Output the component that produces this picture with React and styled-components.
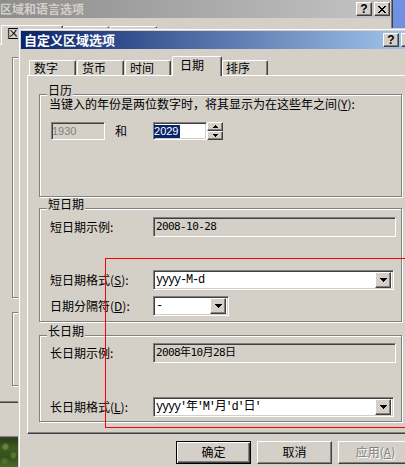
import React from "react";
import styled, { createGlobalStyle, css } from "styled-components";

const FACE = "#d4d0c8";
const SHADOW = "#808080";
const DARK = "#404040";
const CJK = `"Noto Sans CJK SC", "Noto Sans", sans-serif`;

const GlobalStyle = createGlobalStyle`
  html, body { margin: 0; padding: 0; background: ${FACE}; overflow: hidden; }
`;

const raised = css`
  border: 1px solid;
  border-color: #fff ${DARK} ${DARK} #fff;
  box-shadow: inset -1px -1px ${SHADOW};
`;

const sunken = css`
  border: 1px solid;
  border-color: ${SHADOW} #fff #fff ${SHADOW};
  box-shadow: inset 1px 1px ${DARK}, inset -1px -1px ${FACE};
`;

const Desktop = styled.div`
  position: relative;
  width: 405px;
  height: 467px;
  overflow: hidden;
  background: linear-gradient(160deg, #7c9be6, #4f74d6);
  font-family: ${CJK};
  font-size: 12px;
  line-height: 14px;
  color: #000;
`;

/* wallpaper showing at the bottom left corner */
const Grass = styled.div`
  position: absolute;
  left: 0;
  bottom: 0;
  width: 18px;
  height: 29px;
  background:
    radial-gradient(circle at 30% 30%, rgba(120, 150, 70, 0.7) 0 2px, transparent 4px),
    radial-gradient(circle at 75% 60%, rgba(110, 140, 60, 0.6) 0 2px, transparent 4px),
    radial-gradient(circle at 25% 80%, rgba(95, 125, 50, 0.6) 0 2px, transparent 4px),
    linear-gradient(180deg, #2a3c16, #3f5a22 35%, #34501c 65%, #4c6b2a);
`;

const Window = styled.div`
  position: absolute;
  left: ${p => p.$x}px;
  top: ${p => p.$y}px;
  width: ${p => p.$w}px;
  height: ${p => p.$h}px;
  box-sizing: border-box;
  display: flex;
  flex-direction: column;
  background: ${FACE};
  border: 1px solid;
  border-color: ${FACE} ${DARK} ${DARK} ${FACE};
  box-shadow: inset 1px 1px #fff, inset -1px -1px ${SHADOW};
  padding: 2px;
  z-index: ${p => p.$z};
`;

const TitleBar = styled.div`
  flex: none;
  height: 18px;
  display: flex;
  align-items: center;
  gap: 2px;
  padding: 0 ${p => p.$pr}px 0 ${p => p.$pl}px;
  background: ${p =>
    p.$active
      ? "linear-gradient(to right, #0a246a, #a6caf0)"
      : "linear-gradient(to right, #8c8c8c, #c4c4c4)"};
  color: ${p => (p.$active ? "#fff" : FACE)};
`;

const TitleText = styled.div`
  flex: 1;
  font-weight: bold;
  font-size: ${p => p.$size}px;
  white-space: nowrap;
`;

const CapButton = styled.div`
  flex: none;
  box-sizing: border-box;
  width: 16px;
  height: 14px;
  display: flex;
  align-items: center;
  justify-content: center;
  background: ${FACE};
  ${raised};
  color: #000;
  font-family: "Liberation Sans", sans-serif;
  font-weight: bold;
  font-size: 12px;
  line-height: 12px;
`;

const Body = styled.div`
  flex: 1;
  display: flex;
  flex-direction: column;
  padding: 7px 6px 0 ${p => p.$pl}px;
`;

const TabRow = styled.div`
  flex: none;
  height: 19px;
  display: flex;
  align-items: flex-end;
  padding-left: 2px;
  position: relative;
  z-index: 2;
`;

const Tab = styled.div`
  flex: none;
  box-sizing: border-box;
  width: ${p => p.$w}px;
  height: ${p => p.$h}px;
  margin-left: ${p => p.$ml || 0}px;
  margin-bottom: ${p => (p.$active ? -1 : 0)}px;
  padding: ${p => p.$pt}px 0 0 ${p => p.$pl}px;
  background: ${FACE};
  border-top: 1px solid #fff;
  border-left: 1px solid #fff;
  border-right: 1px solid ${DARK};
  box-shadow: inset -1px 0 ${SHADOW};
  border-radius: 2px 2px 0 0;
  white-space: nowrap;
  overflow: hidden;
`;

const Panel = styled.div`
  flex: none;
  box-sizing: border-box;
  height: 359px;
  display: flex;
  flex-direction: column;
  align-items: flex-start;
  padding: 0 0 0 ${p => p.$pl}px;
  border-top: 1px solid #fff;
  border-left: 1px solid #fff;
  border-right: 1px solid ${DARK};
  border-bottom: 1px solid ${DARK};
  box-shadow: inset -1px -1px ${SHADOW};
  position: relative;
  z-index: 1;
`;

const Group = styled.div`
  position: relative;
  flex: none;
  box-sizing: border-box;
  width: ${p => p.$w}px;
  height: ${p => p.$h}px;
  margin-top: ${p => p.$mt}px;
  padding: ${p => p.$pt || 0}px 0 0 ${p => p.$pl || 0}px;
  border: 1px solid ${SHADOW};
  box-shadow: 1px 1px 0 #fff, inset 1px 1px 0 #fff;
`;

const Legend = styled.div`
  position: absolute;
  top: -11px;
  left: 7px;
  padding: 0 1px;
  line-height: 12px;
  background: ${FACE};
  white-space: nowrap;
`;

const Para = styled.div`
  white-space: nowrap;
  margin-top: 2px;
`;

const EditRow = styled.div`
  display: flex;
  align-items: center;
  margin-top: 11px;
  padding-left: 2px;
`;

const Edit = styled.div`
  box-sizing: border-box;
  width: ${p => p.$w}px;
  height: 18px;
  display: flex;
  align-items: center;
  background: ${p => (p.$disabled ? FACE : "#fff")};
  color: ${p => (p.$disabled ? SHADOW : "#000")};
  ${sunken};
  font-family: "Liberation Sans", sans-serif;
  font-size: 11px;
`;

const Selection = styled.span`
  background: #0a246a;
  color: #fff;
  line-height: 13px;
  padding-right: 1px;
`;

const AndText = styled.span`
  margin: 0 26px 0 10px;
`;

const Spinner = styled.div`
  display: flex;
  flex-direction: column;
  width: 16px;
  height: 18px;
`;

const SpinButton = styled.div`
  box-sizing: border-box;
  height: 9px;
  display: flex;
  align-items: center;
  justify-content: center;
  background: ${FACE};
  ${raised};
`;

const FieldRow = styled.div`
  display: grid;
  grid-template-columns: 103px auto;
  align-items: center;
  height: 20px;
  margin-top: ${p => p.$mt || 0}px;
  white-space: nowrap;
`;

const Sample = styled.div`
  box-sizing: border-box;
  width: ${p => p.$w}px;
  height: 20px;
  display: flex;
  align-items: center;
  background: ${FACE};
  ${sunken};
  padding-left: 2px;
  font-family: "DejaVu Sans Mono", ${CJK};
  font-size: 11px;
  letter-spacing: -0.6px;
`;

const Combo = styled.div`
  box-sizing: border-box;
  width: ${p => p.$w}px;
  height: 20px;
  display: flex;
  align-items: center;
  background: #fff;
  ${sunken};
  padding: 0 2px 0 2px;
`;

const ComboText = styled.div`
  flex: 1;
  overflow: hidden;
  white-space: nowrap;
  font-family: "Liberation Mono", ${CJK};
  font-size: 12px;
  letter-spacing: -1.2px;
`;

const DropButton = styled.div`
  flex: none;
  box-sizing: border-box;
  width: 16px;
  height: 16px;
  display: flex;
  align-items: center;
  justify-content: center;
  background: ${FACE};
  ${raised};
`;

const ButtonRow = styled.div`
  display: flex;
  justify-content: flex-end;
  gap: 6px;
  margin-top: 7px;
`;

const PushButton = styled.div`
  box-sizing: border-box;
  width: 75px;
  height: 23px;
  display: flex;
  align-items: center;
  justify-content: center;
  padding-bottom: 2px;
  background: ${FACE};
  ${raised};
  ${p =>
    p.$default &&
    css`
      border: 1px solid #000;
      box-shadow: inset 1px 1px #fff, inset -1px -1px ${DARK}, inset -2px -2px ${SHADOW};
    `}
  ${p =>
    p.$disabled &&
    css`
      color: ${SHADOW};
      text-shadow: 1px 1px #fff;
    `}
`;

const Marker = styled.div`
  position: absolute;
  left: 105px;
  top: 258px;
  width: 330px;
  height: 170px;
  box-sizing: border-box;
  border: 1px solid #ff0000;
  z-index: 10;
  pointer-events: none;
`;

const DownArrow = () => (
  <svg width="7" height="4" viewBox="0 0 7 4" shapeRendering="crispEdges">
    <path d="M0 0h7L3.5 4z" fill="#000" />
  </svg>
);

const SmallArrow = ({ up }) => (
  <svg width="5" height="3" viewBox="0 0 5 3" shapeRendering="crispEdges">
    <path d={up ? "M0 3h5L2.5 0z" : "M0 0h5L2.5 3z"} fill="#000" />
  </svg>
);

const CloseGlyph = () => (
  <svg width="8" height="7" viewBox="0 0 8 7" shapeRendering="crispEdges">
    <path d="M0 0h2l2 2.4L6 0h2L5 3.5 8 7H6L4 4.6 2 7H0l3-3.5z" fill="#000" />
  </svg>
);

const Combobox = ({ w, children }) => (
  <Combo $w={w}>
    <ComboText>{children}</ComboText>
    <DropButton>
      <DownArrow />
    </DropButton>
  </Combo>
);

// the window behind: only its left strip and title bar are visible
function ParentWindow() {
  return (
    <Window $x={-5} $y={-3} $w={398} $h={441} $z={1}>
      <TitleBar $pl={2} $pr={0}>
        <TitleText $size={12}>区域和语言选项</TitleText>
        <CapButton>?</CapButton>
        <CapButton>
          <CloseGlyph />
        </CapButton>
      </TitleBar>
      <Body $pl={1}>
        <TabRow>
          <Tab $w={62} $h={20} $pt={0} $pl={5} $active>
            区
          </Tab>
          <Tab $w={46} $h={18} $pt={1} $pl={5} />
          <Tab $w={47} $h={18} $ml={1} $pt={1} $pl={5} />
        </TabRow>
        <Panel $pl={12}>
          <Group $w={370} $h={241} $mt={12} />
          <Group $w={370} $h={74} $mt={14} />
        </Panel>
      </Body>
    </Window>
  );
}

function DateDialog() {
  return (
    <Window $x={18} $y={28} $w={404} $h={450} $z={2}>
      <TitleBar $active $pl={3} $pr={2}>
        <TitleText $size={13}>自定义区域选项</TitleText>
        <CapButton>?</CapButton>
        <CapButton>
          <CloseGlyph />
        </CapButton>
      </TitleBar>
      <Body $pl={6}>
        <TabRow>
          <Tab $w={47} $h={15} $pt={0} $pl={4}>数字</Tab>
          <Tab $w={47} $h={15} $ml={1} $pt={0} $pl={4}>货币</Tab>
          <Tab $w={46} $h={15} $ml={1} $pt={0} $pl={4}>时间</Tab>
          <Tab $w={50} $h={20} $ml={1} $pt={1} $pl={7} $active>日期</Tab>
          <Tab $w={46} $h={15} $pt={0} $pl={3}>排序</Tab>
        </TabRow>
        <Panel $pl={11}>
          <Group $w={363} $h={103} $mt={18} $pl={9}>
            <Legend>日历</Legend>
            <Para>
              当键入的年份是两位数字时，将其显示为在这些年之间(<u>Y</u>):
            </Para>
            <EditRow>
              <Edit $w={54} $disabled>1930</Edit>
              <AndText>和</AndText>
              <Edit $w={54}>
                <Selection>2029</Selection>
              </Edit>
              <Spinner>
                <SpinButton>
                  <SmallArrow up />
                </SpinButton>
                <SpinButton>
                  <SmallArrow />
                </SpinButton>
              </Spinner>
            </EditRow>
          </Group>

          <Group $w={363} $h={114} $mt={11} $pt={8} $pl={10}>
            <Legend>短日期</Legend>
            <FieldRow>
              <span>短日期示例:</span>
              <Sample $w={243}>2008-10-28</Sample>
            </FieldRow>
            <FieldRow $mt={33}>
              <span>短日期格式(<u>S</u>):</span>
              <Combobox w={241}>yyyy-M-d</Combobox>
            </FieldRow>
            <FieldRow $mt={6}>
              <span>日期分隔符(<u>D</u>):</span>
              <Combobox w={76}>-</Combobox>
            </FieldRow>
          </Group>

          <Group $w={363} $h={87} $mt={13} $pt={7} $pl={10}>
            <Legend>长日期</Legend>
            <FieldRow>
              <span>长日期示例:</span>
              <Sample $w={243}>2008年10月28日</Sample>
            </FieldRow>
            <FieldRow $mt={34}>
              <span>长日期格式(<u>L</u>):</span>
              <Combobox w={241}>yyyy'年'M'月'd'日'</Combobox>
            </FieldRow>
          </Group>
        </Panel>
        <ButtonRow>
          <PushButton $default>确定</PushButton>
          <PushButton>取消</PushButton>
          <PushButton $disabled>
            应用(<u>A</u>)
          </PushButton>
        </ButtonRow>
      </Body>
    </Window>
  );
}

export default function App() {
  return (
    <>
      <GlobalStyle />
      <Desktop>
        <Grass />
        <ParentWindow />
        <DateDialog />
        <Marker />
      </Desktop>
    </>
  );
}
